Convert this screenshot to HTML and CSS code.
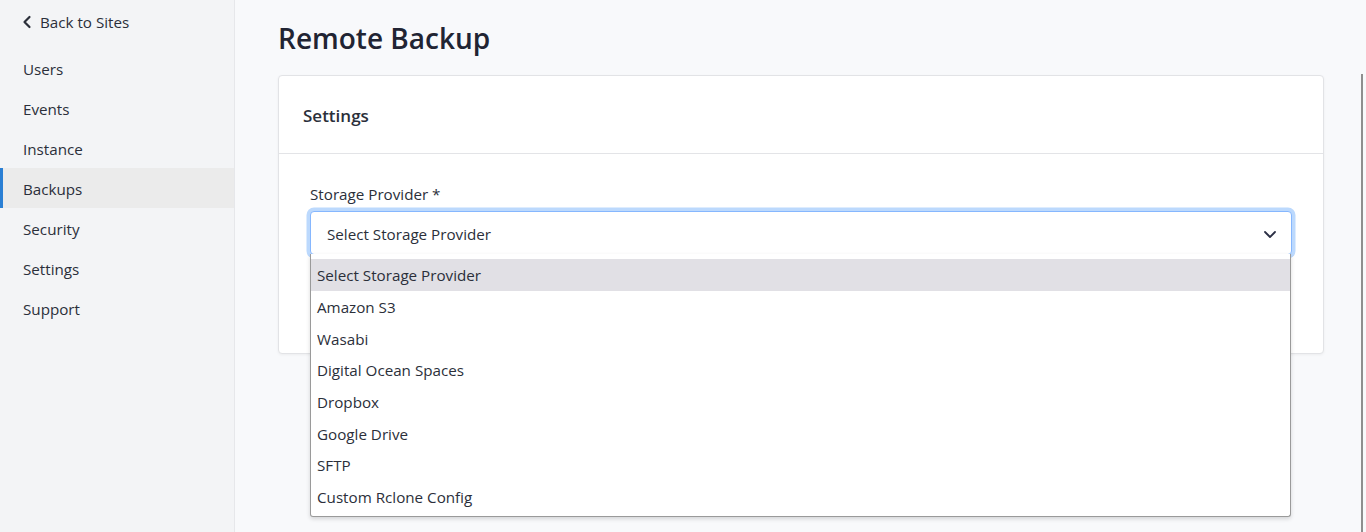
FILE: index.html
```html
<!DOCTYPE html>
<html lang="en">
<head>
<meta charset="utf-8">
<title>Remote Backup</title>
<link rel="stylesheet" href="styles.css">
</head>
<body>
<div class="app">
  <aside class="sidebar">
    <a class="back" href="#">
      <svg class="back-icon" viewBox="0 0 10 14" width="10" height="14"><path d="M7.5 2 L2.5 7 L7.5 12" fill="none" stroke="#2b2f3a" stroke-width="2.2" stroke-linecap="round" stroke-linejoin="round"/></svg>
      <span>Back to Sites</span>
    </a>
    <nav class="nav">
      <a class="nav-item" href="#">Users</a>
      <a class="nav-item" href="#">Events</a>
      <a class="nav-item" href="#">Instance</a>
      <a class="nav-item active" href="#">Backups</a>
      <a class="nav-item" href="#">Security</a>
      <a class="nav-item" href="#">Settings</a>
      <a class="nav-item" href="#">Support</a>
    </nav>
  </aside>
  <main class="main">
    <h1 class="title">Remote Backup</h1>
    <section class="card">
      <header class="card-header">Settings</header>
      <div class="card-body">
        <div class="field">
          <label class="label">Storage Provider *</label>
          <div class="select-wrap">
            <div class="select">
              <span>Select Storage Provider</span>
              <svg class="chev" viewBox="0 0 14 10" width="14" height="10"><path d="M2 3 L7 8 L12 3" fill="none" stroke="#2b2f45" stroke-width="1.8" stroke-linecap="round" stroke-linejoin="round"/></svg>
            </div>
            <ul class="dropdown">
              <li class="opt selected">Select Storage Provider</li>
              <li class="opt">Amazon S3</li>
              <li class="opt">Wasabi</li>
              <li class="opt">Digital Ocean Spaces</li>
              <li class="opt">Dropbox</li>
              <li class="opt">Google Drive</li>
              <li class="opt">SFTP</li>
              <li class="opt">Custom Rclone Config</li>
            </ul>
          </div>
        </div>
      </div>
    </section>
  </main>
  <div class="scroll-line"></div>
</div>
</body>
</html>
```
FILE: styles.css
```css
* { box-sizing: border-box; }
html, body { margin: 0; padding: 0; height: 100%; }
body {
  font-family: "Open Sans", "Noto Sans", sans-serif;
  color: #2b2f3a;
  background: #f8f9fb;
  overflow: hidden;
}
.app {
  display: flex;
  min-height: 532px;
}
.sidebar {
  width: 235px;
  flex: 0 0 235px;
  background: #f3f4f6;
  border-right: 1px solid #e6e7ea;
  min-height: 532px;
}
.back {
  display: flex;
  align-items: center;
  gap: 8px;
  height: 44px;
  padding-left: 22px;
  font-size: 15.2px;
  color: #2b2f3a;
  text-decoration: none;
}
.back-icon { display: block; }
.nav {
  display: flex;
  flex-direction: column;
  padding-top: 4px;
}
.nav-item {
  display: flex;
  align-items: center;
  height: 40px;
  padding-top: 2px;
  font-size: 15.2px;
  color: #2b2f3a;
  text-decoration: none;
  border-left: 3px solid transparent;
  padding-left: 20px;
}
.nav-item.active {
  background: #ebebeb;
  border-left-color: #2a7fd4;
}
.main {
  flex: 1;
  padding: 18px 42px 0 43px;
}
.title {
  margin: 0 0 17px;
  font-size: 28px;
  font-weight: 600;
  line-height: 40px;
  color: #212433;
}
.card {
  background: #fff;
  border: 1px solid #e2e3e6;
  border-radius: 4px;
  box-shadow: 0 1px 3px rgba(0,0,0,0.05);
  height: 279px;
}
.card-header {
  height: 78px;
  display: flex;
  align-items: center;
  padding: 1px 24px 0;
  font-size: 17px;
  font-weight: 600;
  color: #2b2f3a;
  border-bottom: 1px solid #e3e4e7;
}
.card-body {
  padding: 30px 31px 0 31px;
}
.label {
  display: block;
  font-size: 15.2px;
  line-height: 20px;
  margin-bottom: 7px;
  color: #2b2f3a;
}
.select-wrap {
  position: relative;
}
.select {
  display: flex;
  align-items: center;
  justify-content: space-between;
  height: 44px;
  padding: 1px 14px 0 16px;
  border: 1px solid #86b7fe;
  border-radius: 4px;
  box-shadow: 0 0 0 3.5px #bcd9fd;
  background: #fff;
  font-size: 15.2px;
  color: #2b2f3a;
}
.chev { display: block; }
.dropdown {
  position: absolute;
  left: 0;
  right: 1px;
  top: 43px;
  margin: 0;
  padding: 5px 0 3px;
  list-style: none;
  background: #fff;
  border: 1px solid #9a9a9a;
  border-top: none;
  border-radius: 0 0 3px 3px;
  box-shadow: 0 2px 4px rgba(0,0,0,0.15);
  z-index: 5;
}
.opt {
  height: 31.7px;
  display: flex;
  align-items: center;
  padding-left: 6px;
  font-size: 15.2px;
  color: #2b2f3a;
}
.opt.selected {
  background: #e1e0e5;
  height: 32px;
}
.scroll-line {
  position: fixed;
  left: 1361px;
  top: 74px;
  width: 2px;
  height: 458px;
  background: #8e8e8e;
}
```
